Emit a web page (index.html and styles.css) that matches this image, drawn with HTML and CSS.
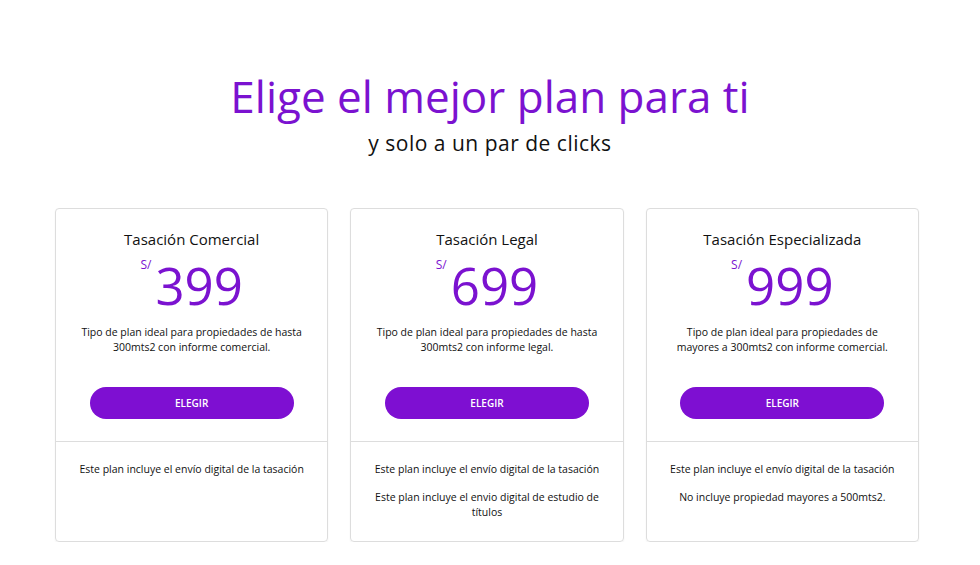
FILE: index.html
```html
<!DOCTYPE html>
<html lang="es">
<head>
    <meta charset="UTF-8">
    <meta name="viewport" content="width=device-width, initial-scale=1.0">
    <title>Planes de Tasación</title>
    <link rel="stylesheet" href="styles.css">
</head>
<body>

    <div class="header">
        <h1>Elige el mejor plan para ti</h1>
        <h2>y solo a un par de clicks</h2>
    </div>

    <div class="plans">
        <div class="plan">
            <div class="plan-top">
                <h3>Tasación Comercial</h3>
                <div class="price"><span class="currency">S/</span><span class="amount">399</span></div>
                <p class="desc">Tipo de plan ideal para propiedades de hasta 300mts2 con informe comercial.</p>
                <button>ELEGIR</button>
            </div>
            <div class="plan-bottom">
                <p>Este plan incluye el envío digital de la tasación</p>
            </div>
        </div>

        <div class="plan">
            <div class="plan-top">
                <h3>Tasación Legal</h3>
                <div class="price"><span class="currency">S/</span><span class="amount">699</span></div>
                <p class="desc">Tipo de plan ideal para propiedades de hasta 300mts2 con informe legal.</p>
                <button>ELEGIR</button>
            </div>
            <div class="plan-bottom">
                <p>Este plan incluye el envío digital de la tasación</p>
                <p>Este plan incluye el envio digital de estudio de títulos</p>
            </div>
        </div>

        <div class="plan">
            <div class="plan-top">
                <h3>Tasación Especializada</h3>
                <div class="price"><span class="currency">S/</span><span class="amount">999</span></div>
                <p class="desc">Tipo de plan ideal para propiedades de mayores a 300mts2 con informe comercial.</p>
                <button>ELEGIR</button>
            </div>
            <div class="plan-bottom">
                <p>Este plan incluye el envío digital de la tasación</p>
                <p>No incluye propiedad mayores a 500mts2.</p>
            </div>
        </div>
    </div>

</body>
</html>
```

FILE: styles.css
```css
/* General Styles */
body {
    font-family: "Open Sans", "Liberation Sans", sans-serif;
    margin: 0;
    padding: 0;
    background-color: #fff;
    color: #111;
}

.header {
    text-align: center;
    padding-top: 68px;
}

.header h1 {
    margin: 0;
    font-size: 44px;
    font-weight: 400;
    color: #7b12d0;
    line-height: 56px;
}

.header h2 {
    margin: 6px 0 0;
    font-size: 21px;
    font-weight: 400;
    letter-spacing: 0.5px;
    color: #111;
    line-height: 26px;
}

.plans {
    display: grid;
    grid-template-columns: repeat(3, 1fr);
    gap: 22px;
    width: 864px;
    margin: 52px 0 0 55px;
}

.plan {
    border: 1px solid #ddd;
    border-radius: 4px;
    height: 332px;
    display: flex;
    flex-direction: column;
    box-shadow: 0 1px 2px rgba(0, 0, 0, 0.05);
}

.plan-top {
    display: flex;
    flex-direction: column;
    align-items: center;
    padding: 20px 20px 22px;
    border-bottom: 1px solid #ddd;
}

.plan-top h3 {
    margin: 0;
    font-size: 15px;
    font-weight: 400;
    line-height: 20px;
}

.price {
    display: flex;
    align-items: flex-start;
    color: #7b12d0;
    margin-top: 9px;
}

.currency {
    font-size: 12px;
    margin-top: -2px;
    margin-right: 4px;
}

.amount {
    font-size: 51px;
    line-height: 54px;
}

.desc {
    margin: 13px 0 0;
    font-size: 10.5px;
    line-height: 15px;
    text-align: center;
    max-width: 225px;
}

.plan-top button {
    margin-top: 32px;
    width: 204px;
    height: 32px;
    border: none;
    border-radius: 16px;
    background-color: #7e0fd2;
    color: #fff;
    font-family: inherit;
    font-size: 10px;
    font-weight: 600;
    cursor: pointer;
}

.plan-bottom {
    padding: 20px 20px 0;
    text-align: center;
}

.plan-bottom p {
    margin: 0 0 13px;
    font-size: 10.5px;
    line-height: 15px;
}
```
